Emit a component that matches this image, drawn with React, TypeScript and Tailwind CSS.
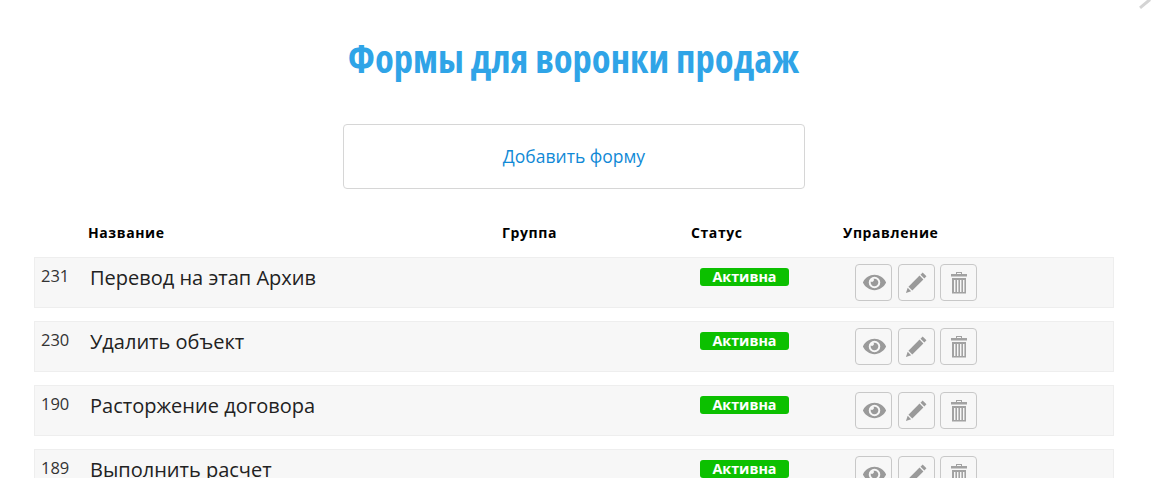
import { FaEye } from 'react-icons/fa';

const forms = [
  { id: 231, name: 'Перевод на этап Архив' },
  { id: 230, name: 'Удалить объект' },
  { id: 190, name: 'Расторжение договора' },
  { id: 189, name: 'Выполнить расчет' },
];

function PencilIcon() {
  return (
    <svg width="23" height="23" viewBox="0 0 24 24" fill="#9a9a9a">
      <path d="M18.4 1.6l4 4-2.2 2.2-4-4z" />
      <path d="M15.2 4.8l4 4L7.6 20.4l-4-4z" />
      <path d="M2.8 17.6l3.6 3.6L1 23z" />
    </svg>
  );
}

function TrashIcon() {
  return (
    <svg width="18" height="24" viewBox="0 0 18 24" fill="#a2a2a2">
      <path d="M6 1h6v2h5v2.5H1V3h5V1zm1 1v1h4V2H7z" fillRule="evenodd" />
      <path d="M2 7h14v15.5H2V7zm2 2v12h1.4V9H4zm3 0v12h1.4V9H7zm3 0v12h1.4V9H10zm3 0v12h1.4V9H13z" fillRule="evenodd" />
    </svg>
  );
}

function ActionButton({ children, className = '' }: { children: React.ReactNode; className?: string }) {
  return (
    <button className={`w-[37px] h-[37px] flex items-center justify-center bg-[#f7f7f7] border border-[#c8c8c8] rounded-[4px] ${className}`}>
      {children}
    </button>
  );
}

function FormRow({ id, name }: { id: number; name: string }) {
  return (
    <div className="flex h-[51px] mb-[13px] bg-[#f7f7f7] border border-[#eeeeee] text-[#222]">
      <div className="w-[55px] pl-[6px] pt-[8px] text-[16.5px] leading-[20px] shrink-0 text-[#333]">{id}</div>
      <div className="w-[610px] pt-[7px] text-[20px] leading-[26px] shrink-0">{name}</div>
      <div className="w-[155px] pt-[10px] shrink-0">
        <span className="flex items-center justify-center w-[89px] h-[18px] bg-[#0cc000] rounded-[3px] text-white text-[14.3px] font-bold leading-none">
          Активна
        </span>
      </div>
      <div className="flex gap-[6px] pt-[6px]">
        <ActionButton><FaEye className="text-[#9a9a9a] text-[23px] ml-px" /></ActionButton>
        <ActionButton><PencilIcon /></ActionButton>
        <ActionButton className="-ml-px"><TrashIcon /></ActionButton>
      </div>
    </div>
  );
}

export default function App() {
  return (
    <div className="relative h-[478px] overflow-hidden bg-white font-['Open_Sans',sans-serif]">
      <div className="absolute right-[3px] top-[-5px] w-[13px] h-[3px] bg-[#d4d4d4] rotate-[-40deg] origin-right translate-y-[3px]" />
      <h1 className="pt-[35px] pr-[6px] text-center text-[38.6px] leading-[46px] font-bold text-[#2fa4e7] [font-stretch:75%]">
        Формы для воронки продаж
      </h1>
      <a className="flex items-center justify-center w-[462px] h-[65px] mt-[43px] ml-[343px] border border-[#d6d6d6] rounded-[4px] text-[#1089d6] text-[17.5px]">
        Добавить форму
      </a>
      <div className="ml-[34px] mr-[39px] mt-[34px]">
        <div className="flex h-[20px] mb-[14px] text-[14px] leading-[20px] font-bold text-black tracking-[0.6px]">
          <div className="w-[54px] shrink-0" />
          <div className="w-[414px] shrink-0">Название</div>
          <div className="w-[189px] shrink-0">Группа</div>
          <div className="w-[152px] shrink-0">Статус</div>
          <div>Управление</div>
        </div>
        {forms.map((form) => (
          <FormRow key={form.id} id={form.id} name={form.name} />
        ))}
      </div>
    </div>
  );
}
